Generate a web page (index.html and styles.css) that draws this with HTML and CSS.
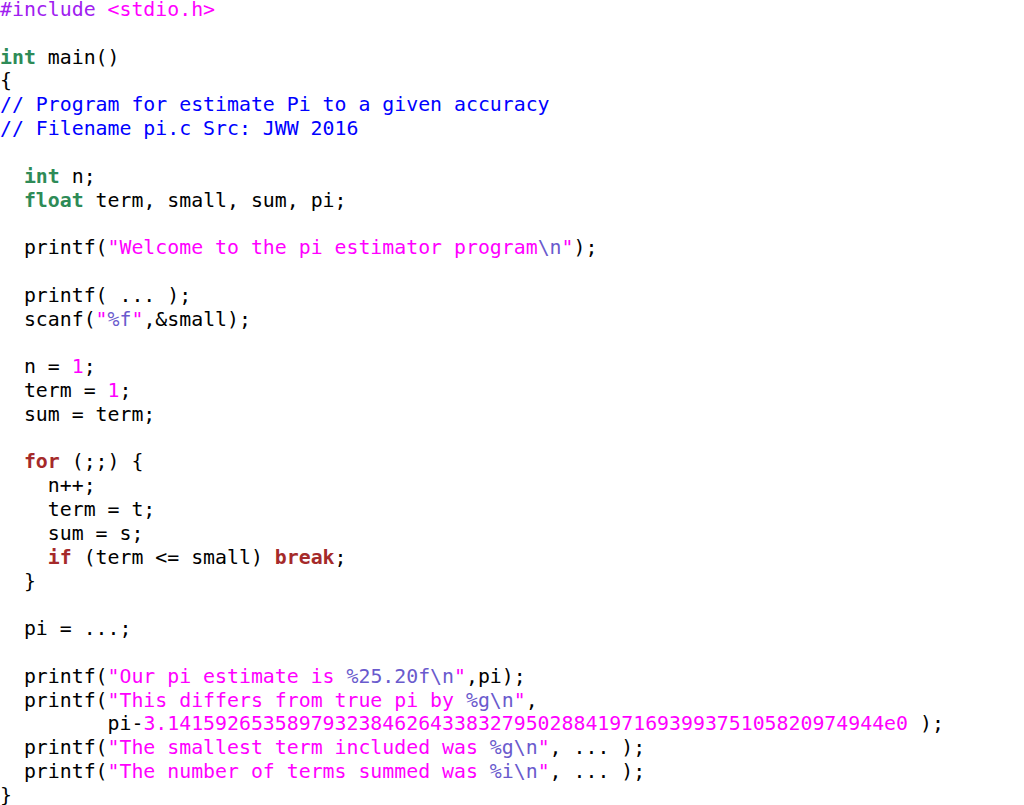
FILE: index.html
```html
<!DOCTYPE html>
<html>
<head>
<meta charset="utf-8">
<link rel="stylesheet" href="styles.css">
</head>
<body>
<pre class="code"><span class="pp">#include </span><span class="st">&lt;stdio.h&gt;</span>

<span class="ty">int</span> main()
{
<span class="cm">// Program for estimate Pi to a given accuracy</span>
<span class="cm">// Filename pi.c Src: JWW 2016</span>

  <span class="ty">int</span> n;
  <span class="ty">float</span> term, small, sum, pi;

  printf(<span class="st">"Welcome to the pi estimator program<span class="sp">\n</span>"</span>);

  printf( ... );
  scanf(<span class="st">"<span class="sp">%f</span>"</span>,&amp;small);

  n = <span class="st">1</span>;
  term = <span class="st">1</span>;
  sum = term;

  <span class="kw">for</span> (;;) {
    n++;
    term = t;
    sum = s;
    <span class="kw">if</span> (term &lt;= small) <span class="kw">break</span>;
  }

  pi = ...;

  printf(<span class="st">"Our pi estimate is <span class="sp">%25.20f\n</span>"</span>,pi);
  printf(<span class="st">"This differs from true pi by <span class="sp">%g\n</span>"</span>,
         pi-<span class="st">3.141592653589793238462643383279502884197169399375105820974944e0</span> );
  printf(<span class="st">"The smallest term included was <span class="sp">%g\n</span>"</span>, ... );
  printf(<span class="st">"The number of terms summed was <span class="sp">%i\n</span>"</span>, ... );
}
</pre>
</body>
</html>
```
FILE: styles.css
```css
html, body {
  margin: 0;
  padding: 0;
  background: #ffffff;
}
.code {
  margin: -2px 0 0 0;
  padding: 0;
  font-family: "DejaVu Sans Mono", monospace;
  font-size: 19.85px;
  line-height: 23.82px;
  color: #000000;
}
.pp { color: #a020f0; }
.st { color: #ff00ff; }
.sp { color: #6a5acd; }
.cm { color: #0000ff; }
.ty { color: #2e8b57; font-weight: bold; }
.kw { color: #a52a2a; font-weight: bold; }
```
